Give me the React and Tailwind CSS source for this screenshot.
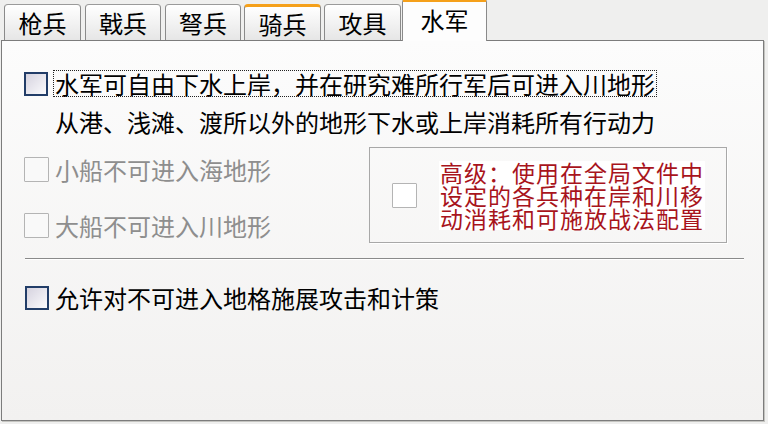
import React from "react";

const FONT = "font-['Noto_Sans_CJK_SC',sans-serif]";

function Tab({ label, w, orange, selected }) {
  if (selected) {
    return (
      <div
        className={`relative z-10 -mb-[1px] h-[42px] ${w} rounded-t-[3px] border-x border-[#8a8a8a] border-t-[3px] border-t-[#f5a01a] bg-[#fdfdfd] flex items-start justify-center pt-[3px]`}
      >
        <span className="text-[24px] leading-[30px] text-black">{label}</span>
      </div>
    );
  }
  return (
    <div
      className={`h-[36px] ${w} rounded-t-[4px] border-x border-[#8a8a8a] ${
        orange ? "border-t-[3px] border-t-[#f5a01a]" : "border-t border-t-[#9a9a9a]"
      } bg-gradient-to-b from-[#ffffff] to-[#e6e6e6] flex items-center justify-center`}
    >
      <span className="text-[24px] leading-[30px] text-black">{label}</span>
    </div>
  );
}

function ActiveBox() {
  return (
    <div className="w-[24px] h-[24px] shrink-0 border-2 border-[#223d68] bg-gradient-to-br from-[#d6d3df] to-[#fbfbfd]" />
  );
}

function DisabledBox({ white }) {
  return (
    <div
      className={`w-[25px] h-[25px] shrink-0 border border-[#b4b4b4] rounded-[1px] ${
        white ? "bg-white" : "bg-[#f9f9f9]"
      }`}
    />
  );
}

export default function App() {
  return (
    <div className={`w-[768px] h-[424px] bg-[#efefee] flex flex-col pl-[1px] pr-[4px] pb-[3px] ${FONT}`}>
      <div className="h-[40px] flex items-end pl-[3px] shrink-0">
        <Tab label="枪兵" w="w-[77px]" />
        <div className="w-[4px]" />
        <Tab label="戟兵" w="w-[76px]" />
        <div className="w-[4px]" />
        <Tab label="弩兵" w="w-[76px]" />
        <div className="w-[3px]" />
        <Tab label="骑兵" w="w-[77px]" orange />
        <div className="w-[3px]" />
        <Tab label="攻具" w="w-[77px]" />
        <div className="w-[1px]" />
        <Tab label="水军" w="w-[85px]" selected />
      </div>
      <div className="flex-1 border border-[#7c7c7c] bg-gradient-to-b from-[#fcfcfc] to-[#f2f1f0] shadow-[1px_1px_0_#c4c4c0] flex flex-col">
        {/* Row 1 */}
        <div className="mt-[29px] h-[27px] flex items-center pl-[22px]">
          <ActiveBox />
          <div className="ml-[5px] h-[27px] border border-dotted border-[#222] px-[1px] flex items-center">
            <span className="text-[24px] leading-[25px] text-black whitespace-nowrap">
              水军可自由下水上岸，并在研究难所行军后可进入川地形
            </span>
          </div>
        </div>
        {/* Row 2 */}
        <div className="mt-[11px] h-[27px] pl-[53px] flex items-center">
          <span className="text-[24px] leading-[27px] text-black whitespace-nowrap">
            从港、浅滩、渡所以外的地形下水或上岸消耗所有行动力
          </span>
        </div>
        {/* Middle */}
        <div className="mt-[12px] flex pl-[22px]">
          <div className="w-[345px] flex flex-col">
            <div className="mt-[10px] h-[25px] flex items-center">
              <DisabledBox />
              <span className="ml-[6px] text-[24px] leading-[25px] text-[#8e8e8e] whitespace-nowrap">
                小船不可进入海地形
              </span>
            </div>
            <div className="mt-[30px] h-[26px] flex items-center">
              <DisabledBox />
              <span className="ml-[6px] text-[24px] leading-[25px] text-[#8e8e8e] whitespace-nowrap">
                大船不可进入川地形
              </span>
            </div>
          </div>
          <div className="w-[358px] h-[96px] border border-[#a8a8a8] shadow-[1px_1px_0_#ffffff] flex items-center">
            <div className="ml-[22px]">
              <DisabledBox white />
            </div>
            <div className="ml-[22px] bg-white px-[1px] text-[23px] tracking-[1px] leading-[23px] text-[#a8141c] w-[266px]">
              <div className="whitespace-nowrap">高级：使用在全局文件中</div>
              <div className="whitespace-nowrap">设定的各兵种在岸和川移</div>
              <div className="whitespace-nowrap">动消耗和可施放战法配置</div>
            </div>
          </div>
        </div>
        {/* Separator */}
        <div className="mt-[15px] ml-[23px] mr-[19px] h-[1px] bg-[#8a8a8a] shadow-[0_1px_0_#ffffff]" />
        {/* Row last */}
        <div className="mt-[26px] h-[26px] flex items-center pl-[23px]">
          <ActiveBox />
          <span className="ml-[6px] text-[24px] leading-[26px] text-black whitespace-nowrap">
            允许对不可进入地格施展攻击和计策
          </span>
        </div>
      </div>
    </div>
  );
}
